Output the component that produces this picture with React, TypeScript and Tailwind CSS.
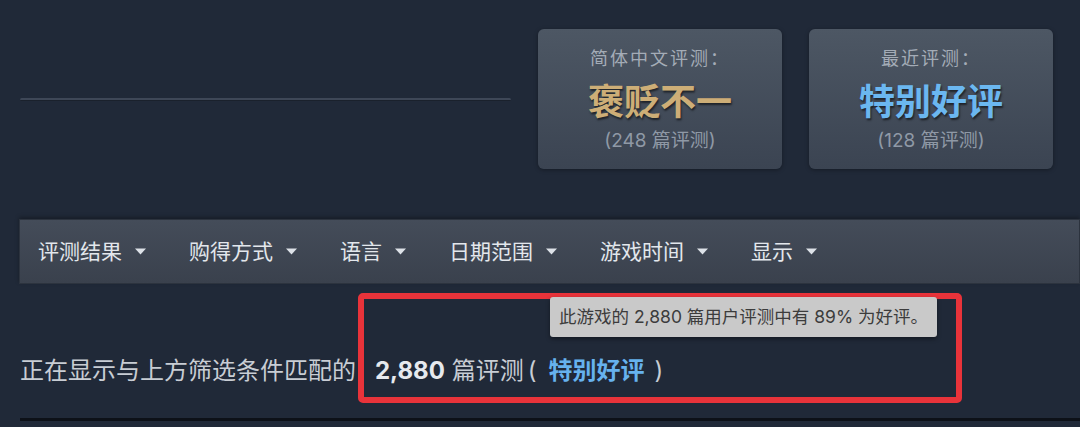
import React from "react";

// 下拉小三角
function Caret() {
  return (
    <svg width="11" height="7" viewBox="0 0 11 7" className="shrink-0">
      <path d="M0 0.5 H11 L5.5 6.5 Z" fill="#dde2e8" />
    </svg>
  );
}

type Summary = {
  label: string;
  verdict: string;
  count: string;
  tone: "mixed" | "positive";
};

const summaries: Summary[] = [
  { label: "简体中文评测：", verdict: "褒贬不一", count: "(248 篇评测)", tone: "mixed" },
  { label: "最近评测：", verdict: "特别好评", count: "(128 篇评测)", tone: "positive" },
];

const filters = ["评测结果", "购得方式", "语言", "日期范围", "游戏时间", "显示"];

function SummaryCard({ s }: { s: Summary }) {
  return (
    <div className="w-[244px] h-[140px] rounded-[6px] bg-linear-to-b from-[#4d5764] to-[#3b4452] shadow-[0_1px_4px_rgba(0,0,0,0.35)] flex flex-col items-center pt-[20px]">
      <div className="text-[18px] leading-[20px] tracking-[2px] text-[#a4acb7]">{s.label}</div>
      <div
        className={`mt-[12px] text-[36px] leading-[42px] font-bold [text-shadow:1px_2px_2px_rgba(0,0,0,0.55)] ${
          s.tone === "mixed" ? "text-[#cdae77]" : "text-[#6bb7f0]"
        }`}
      >
        {s.verdict}
      </div>
      <div className="mt-[7px] text-[19px] leading-[22px] text-[#8f99a6]">{s.count}</div>
    </div>
  );
}

export default function App() {
  return (
    <div className="w-[1080px] h-[427px] overflow-hidden bg-[#202938] font-['Inter','Noto_Sans_CJK_SC',sans-serif]">
      {/* 顶部：分隔线 + 评测摘要 */}
      <div className="flex pl-[20px] pt-[29px]">
        <div className="w-[491px] flex items-center">
          <div className="w-full h-[3px] rounded-full bg-[#3e4757] border-b border-[#1a212c]" />
        </div>
        <div className="ml-[27px] flex gap-[27px]">
          {summaries.map((s) => (
            <SummaryCard key={s.label} s={s} />
          ))}
        </div>
      </div>

      {/* 筛选栏 */}
      <div className="mt-[50px] ml-[19px] h-[65px] flex items-center pl-[18px] bg-linear-to-b from-[#444c59] to-[#3a414d] border border-[#2c333e] shadow-[0_-2px_4px_rgba(0,0,0,0.3)]">
        {filters.map((f) => (
          <div key={f} className="flex items-center gap-[13px] mr-[43px]">
            <span className="text-[21px] leading-[28px] text-[#e3e7ec]">{f}</span>
            <Caret />
          </div>
        ))}
      </div>

      {/* 结果统计 */}
      <div className="mt-[9px] flex items-end pl-[20px]">
        <div className="mb-[16px] text-[24px] leading-[32px] text-[#c8cdd4] whitespace-nowrap">
          正在显示与上方筛选条件匹配的
        </div>
        <div className="relative ml-[2px] w-[604px] h-[110px] rounded-[5px] border-[6px] border-[#e8333a] flex items-end pl-[11px] pb-[10px]">
          <div className="absolute left-[186px] top-[-2px] h-[40px] flex items-center px-[9px] rounded-[3px] bg-[#c9c9c9] shadow-[0_2px_4px_rgba(0,0,0,0.4)] text-[17.5px] text-[#3c3c3c] whitespace-nowrap">
            此游戏的 2,880 篇用户评测中有 89% 为好评。
          </div>
          <div className="text-[24px] leading-[32px] whitespace-nowrap text-[#c8cdd4]">
            <span className="font-bold text-[#e6e9ee]">2,880</span> 篇评测
            <span className="ml-[4px] mr-[12px]">(</span>
            <span className="font-bold text-[#66b2ee]">特别好评</span>
            <span className="ml-[10px]">)</span>
          </div>
        </div>
      </div>

      <div className="mt-[15px] ml-[20px] h-[3px] bg-[#0d1118]" />
    </div>
  );
}
